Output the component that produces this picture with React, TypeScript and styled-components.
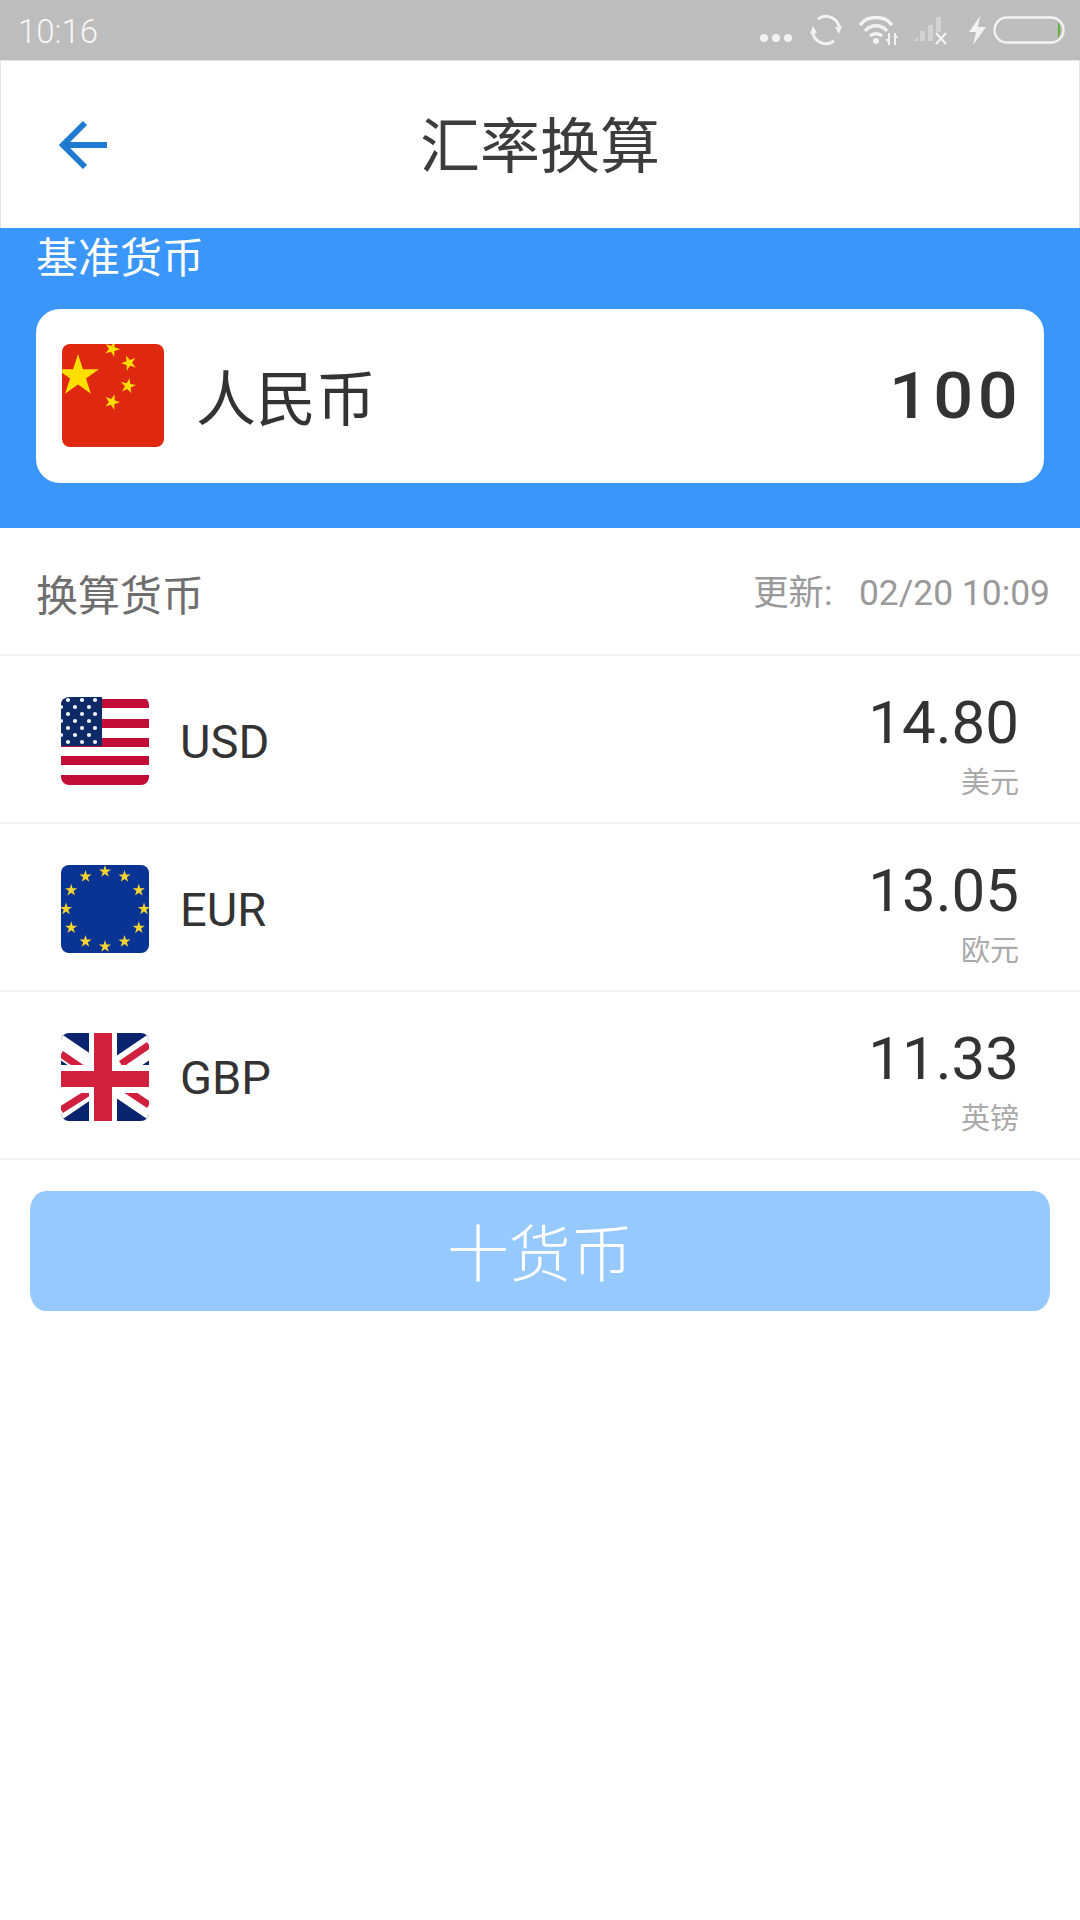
import React from 'react';
import styled, { createGlobalStyle } from 'styled-components';

const GlobalStyle = createGlobalStyle`
  html, body {
    margin: 0;
    background: #fff;
  }
  body {
    font-family: Roboto, 'Noto Sans CJK SC', sans-serif;
  }
`;

const Page = styled.div`
  width: 1080px;
  height: 1920px;
  background: #fff;
  overflow: hidden;
`;

const StatusBar = styled.div`
  height: 60px;
  background: #bdbdbd;
  display: flex;
  align-items: center;
  justify-content: space-between;
  padding: 0 15px 0 18px;
  box-sizing: border-box;
`;

const Clock = styled.span`
  font-size: 33px;
  font-weight: 300;
  color: #f6f6f6;
  padding-top: 2px;
`;

const StatusIcons = styled.div`
  display: flex;
  align-items: center;
`;

const StatusIcon = styled.svg<{ $gap?: number }>`
  display: block;
  flex: none;
  margin-left: ${(props) => props.$gap ?? 0}px;
`;

const NavBar = styled.div`
  height: 168px;
  box-sizing: border-box;
  display: grid;
  grid-template-columns: 1fr auto 1fr;
  align-items: center;
  border: 1px solid #e4e4e4;
  border-bottom: none;
`;

const BackButton = styled.div`
  padding-left: 58px;
  display: flex;
  align-items: center;
`;

const Title = styled.h1`
  margin: 0;
  padding-top: 6px;
  font-size: 60px;
  font-weight: 400;
  color: #3c3c3c;
  line-height: 84px;
`;

const BaseSection = styled.section`
  background: #3a96f8;
  padding: 0 36px 45px;
`;

const BaseLabel = styled.div`
  font-size: 42px;
  line-height: 62px;
  font-weight: 400;
  color: #fff;
  margin-bottom: 19px;
`;

const BaseCard = styled.div`
  height: 174px;
  background: #fff;
  border-radius: 24px;
  display: flex;
  align-items: center;
  padding: 0 26px 0 26px;
  box-sizing: border-box;
`;

const BaseFlag = styled.svg`
  width: 102px;
  height: 103px;
  flex: none;
  margin-top: -2px;
`;

const BaseName = styled.span`
  margin-left: 32px;
  margin-top: -4px;
  font-size: 60px;
  color: #333;
  flex: 1;
`;

const LedValue = styled.span`
  font-size: 64px;
  font-weight: 500;
  line-height: 70px;
  letter-spacing: 4px;
  margin-right: -4px;
  margin-top: 2px;
  color: #333;
  transform: scaleX(1.1);
  transform-origin: right center;
`;

const ListHeader = styled.div`
  height: 126px;
  display: flex;
  align-items: center;
  justify-content: space-between;
  padding: 0 30px 0 36px;
  border-bottom: 2px solid #f2f2f2;
`;

const ListTitle = styled.span`
  font-size: 42px;
  font-weight: 400;
  color: #6e6e6e;
  padding-top: 2px;
`;

const Updated = styled.span`
  font-size: 35.4px;
  color: #999;
  white-space: pre;
  margin-top: -3px;
`;

const Row = styled.div`
  height: 166px;
  display: flex;
  align-items: center;
  padding: 0 61px 0 61px;
  border-bottom: 2px solid #f2f2f2;
`;

const RowFlag = styled.svg`
  width: 88px;
  height: 88px;
  flex: none;
  margin-top: 4px;
`;

const Code = styled.span`
  margin-left: 31px;
  font-size: 47px;
  color: #333;
  flex: 1;
  padding-top: 4px;
`;

const Amount = styled.div`
  display: flex;
  flex-direction: column;
  align-items: flex-end;
  padding-top: 10px;
`;

const AmountValue = styled.span`
  font-size: 60px;
  line-height: 70px;
  color: #333;
`;

const AmountName = styled.span`
  font-size: 29px;
  line-height: 36px;
  margin-top: 7px;
  color: #aaa;
`;

const AddButton = styled.div`
  margin: 31px 30px 0;
  height: 120px;
  background: #96c9fe;
  border-radius: 16px / 20px;
  display: flex;
  align-items: center;
  justify-content: center;
  padding-bottom: 2px;
  box-sizing: border-box;
  font-size: 62px;
  font-weight: 300;
  color: #fff;
`;

const starPoints = (cx: number, cy: number, r: number, turn = 0) => {
  const pts: string[] = [];
  for (let i = 0; i < 10; i++) {
    const rad = i % 2 === 0 ? r : r * 0.382;
    const a = -Math.PI / 2 + turn + (i * Math.PI) / 5;
    pts.push(`${(cx + rad * Math.cos(a)).toFixed(2)},${(cy + rad * Math.sin(a)).toFixed(2)}`);
  }
  return pts.join(' ');
};

const ChinaFlag = () => (
  <BaseFlag viewBox="0 0 102 103">
    <defs>
      <clipPath id="cnClip">
        <rect width="102" height="103" rx="8" />
      </clipPath>
    </defs>
    <g clipPath="url(#cnClip)">
      <rect width="102" height="103" fill="#de2910" />
      <polygon points={starPoints(16, 32, 22)} fill="#ffde00" />
      <polygon points={starPoints(50, 5, 8, 0.35)} fill="#ffde00" />
      <polygon points={starPoints(67, 19, 8, 0.9)} fill="#ffde00" />
      <polygon points={starPoints(66, 42, 8, 0.2)} fill="#ffde00" />
      <polygon points={starPoints(50, 58, 8, 0.35)} fill="#ffde00" />
    </g>
  </BaseFlag>
);

const UsFlag = () => {
  const redStripes = [2, 22, 41, 59, 78];
  const stars: [number, number][] = [];
  [3, 10, 17, 24, 31, 38, 45].forEach((y, i) => {
    (i % 2 === 0 ? [7, 21, 34] : [0, 14, 28]).forEach((x) => stars.push([x, y]));
  });
  return (
    <RowFlag viewBox="0 0 88 88">
      <defs>
        <clipPath id="usClip">
          <rect width="88" height="88" rx="8" />
        </clipPath>
      </defs>
      <g clipPath="url(#usClip)">
        <rect width="88" height="88" fill="#fff" />
        {redStripes.map((y) => (
          <rect key={y} y={y} width="88" height={y === 78 ? 10 : 9} fill="#c20e36" />
        ))}
        <rect width="41" height="49" fill="#0e2a66" />
        {stars.map(([x, y]) => (
          <circle key={`${x}-${y}`} cx={x} cy={y} r="2.1" fill="#f2f4fa" />
        ))}
      </g>
    </RowFlag>
  );
};

const EuFlag = () => (
  <RowFlag viewBox="0 0 88 88">
    <defs>
      <clipPath id="euClip">
        <rect width="88" height="88" rx="8" />
      </clipPath>
    </defs>
    <g clipPath="url(#euClip)">
      <rect width="88" height="88" fill="#0a3493" />
      {Array.from({ length: 12 }).map((_, i) => {
        const a = (i * Math.PI) / 6;
        return (
          <polygon
            key={i}
            points={starPoints(44 + 39 * Math.sin(a), 44 - 37.5 * Math.cos(a), 6.4)}
            fill="#f6d42e"
          />
        );
      })}
    </g>
  </RowFlag>
);

const UkFlag = () => (
  <RowFlag viewBox="0 0 88 88">
    <defs>
      <clipPath id="ukClip">
        <rect width="88" height="88" rx="8" />
      </clipPath>
    </defs>
    <g clipPath="url(#ukClip)">
      <rect width="88" height="88" fill="#0a2470" />
      <path d="M-12 6 L100 82 M-12 82 L100 6" stroke="#fff" strokeWidth="22" />
      <path d="M0 21 L22 36 M88 12 L60 31 M0 77 L30 58 M88 72 L64 56" stroke="#d0203e" strokeWidth="7" />
      <path d="M42 0 V88 M0 46 H88" stroke="#fff" strokeWidth="28" />
      <path d="M42 0 V88" stroke="#d0203e" strokeWidth="18" />
      <path d="M0 46 H88" stroke="#d0203e" strokeWidth="16" />
    </g>
  </RowFlag>
);

const BackArrow = () => (
  <svg width="50" height="50" viewBox="0 0 50 50" fill="none" stroke="#1f7ad1" strokeWidth="6">
    <path d="M48 25 H5" />
    <path d="M26 3 L4 25 L26 47" />
  </svg>
);

const DotsIcon = () => (
  <StatusIcon width="34" height="30" viewBox="0 0 34 30" fill="#f2f2f2">
    <circle cx="5" cy="23" r="4" />
    <circle cx="17" cy="23" r="4" />
    <circle cx="29" cy="23" r="4" />
  </StatusIcon>
);

const SyncIcon = () => (
  <StatusIcon $gap={17} width="32" height="32" viewBox="0 0 32 32" fill="none" stroke="#f2f2f2" strokeWidth="3">
    <path d="M8 5 A13.5 13.5 0 0 1 29.5 15" />
    <path d="M24 27 A13.5 13.5 0 0 1 2.5 17" />
    <polygon points="25,13 32,12 29,20" fill="#f2f2f2" stroke="none" />
    <polygon points="0,20 7,19 3,12" fill="#f2f2f2" stroke="none" />
  </StatusIcon>
);

const WifiIcon = () => (
  <StatusIcon $gap={16} width="40" height="30" viewBox="0 0 40 30" fill="none" stroke="#f2f2f2" strokeWidth="3.4">
    <path d="M2 10 C9 0 27 0 34 10" />
    <path d="M7 16 C13 9 23 9 29 16" />
    <path d="M12 21 C15 18 21 18 24 21" />
    <circle cx="18" cy="26" r="3" fill="#f2f2f2" stroke="none" />
    <path d="M31 18 V30 M37 18 V30" strokeWidth="2" />
    <polygon points="27.5,24 31,24 31,29" fill="#f2f2f2" stroke="none" />
    <polygon points="40,23 37,23 37,18" fill="#f2f2f2" stroke="none" />
  </StatusIcon>
);

const SignalIcon = () => (
  <StatusIcon $gap={15} width="34" height="30" viewBox="0 0 34 30" fill="#d2d2d2">
    <polygon points="0,26 5,22 5,26" />
    <rect x="7" y="16" width="5" height="10" />
    <rect x="15" y="10" width="5" height="16" />
    <rect x="23" y="2" width="5" height="15" />
    <path d="M23 18 L33 29 M33 18 L23 29" stroke="#f2f2f2" strokeWidth="2.2" fill="none" />
  </StatusIcon>
);

const BoltIcon = () => (
  <StatusIcon $gap={22} width="17" height="29" viewBox="0 0 17 29" fill="#f2f2f2">
    <polygon points="11,0 0,16 7,16 4,29 17,11 9,11" />
  </StatusIcon>
);

const BatteryIcon = () => (
  <StatusIcon $gap={7} width="72" height="28" viewBox="0 0 72 28" fill="none">
    <rect x="1.5" y="1.5" width="69" height="25" rx="12.5" stroke="#f2f2f2" strokeWidth="2.4" />
    <path d="M65 6 C68 9 68 19 65 22 Z" fill="#5cb531" />
  </StatusIcon>
);

type Rate = {
  code: string;
  value: string;
  name: string;
  flag: React.ReactNode;
};

const rates: Rate[] = [
  { code: 'USD', value: '14.80', name: '美元', flag: <UsFlag /> },
  { code: 'EUR', value: '13.05', name: '欧元', flag: <EuFlag /> },
  { code: 'GBP', value: '11.33', name: '英镑', flag: <UkFlag /> },
];

const App = (): JSX.Element => (
  <Page>
    <GlobalStyle />
    <StatusBar>
      <Clock>10:16</Clock>
      <StatusIcons>
        <DotsIcon />
        <SyncIcon />
        <WifiIcon />
        <SignalIcon />
        <BoltIcon />
        <BatteryIcon />
      </StatusIcons>
    </StatusBar>
    <NavBar>
      <BackButton>
        <BackArrow />
      </BackButton>
      <Title>汇率换算</Title>
    </NavBar>
    <BaseSection>
      <BaseLabel>基准货币</BaseLabel>
      <BaseCard>
        <ChinaFlag />
        <BaseName>人民币</BaseName>
        <LedValue>100</LedValue>
      </BaseCard>
    </BaseSection>
    <ListHeader>
      <ListTitle>换算货币</ListTitle>
      <Updated>更新:   02/20 10:09</Updated>
    </ListHeader>
    {rates.map((rate) => (
      <Row key={rate.code}>
        {rate.flag}
        <Code>{rate.code}</Code>
        <Amount>
          <AmountValue>{rate.value}</AmountValue>
          <AmountName>{rate.name}</AmountName>
        </Amount>
      </Row>
    ))}
    <AddButton>十货币</AddButton>
  </Page>
);

export default App;
